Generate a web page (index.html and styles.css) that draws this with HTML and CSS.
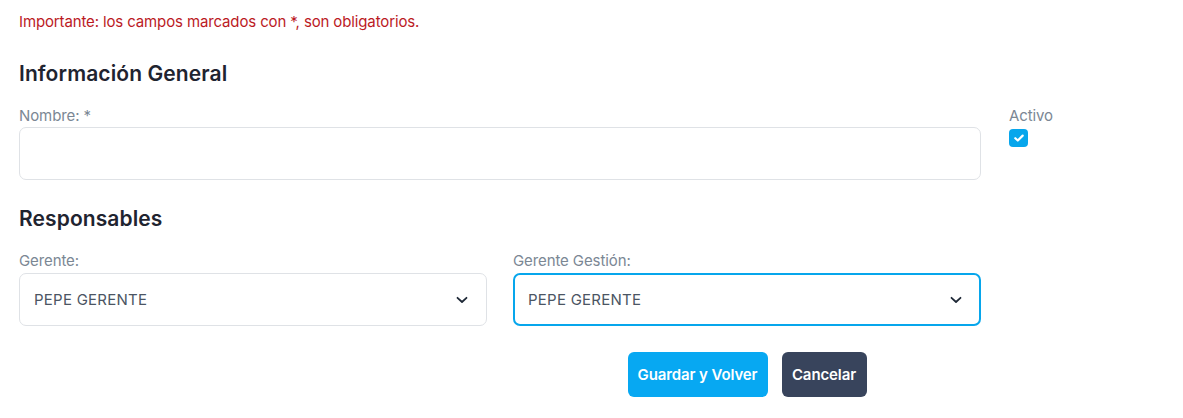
FILE: index.html
```html
<!DOCTYPE html>
<html lang="es">
<head>
<meta charset="utf-8">
<link rel="stylesheet" href="styles.css">
</head>
<body>
<form class="form">
  <p class="notice">Importante: los campos marcados con *, son obligatorios.</p>
  <h2 class="section-title title-general">Información General</h2>
  <div class="row">
    <div class="field field-wide">
      <label class="label">Nombre: *</label>
      <div class="input"></div>
    </div>
    <div class="field field-check">
      <label class="label">Activo</label>
      <span class="checkbox">
        <svg width="14" height="14" viewBox="0 0 14 14"><path d="M3.3 7.2 L5.8 9.5 L10.7 4.6" fill="none" stroke="#fff" stroke-width="2.2" stroke-linecap="round" stroke-linejoin="round"/></svg>
      </span>
    </div>
  </div>
  <h2 class="section-title title-resp">Responsables</h2>
  <div class="grid2">
    <div class="field">
      <label class="label">Gerente:</label>
      <div class="select">
        <span>PEPE GERENTE</span>
        <svg class="chev" width="12" height="8" viewBox="0 0 12 8"><path d="M1.5 1.8 L6 6 L10.5 1.8" fill="none" stroke="#1f2937" stroke-width="1.8" stroke-linecap="round" stroke-linejoin="round"/></svg>
      </div>
    </div>
    <div class="field">
      <label class="label">Gerente Gestión:</label>
      <div class="select focused">
        <span>PEPE GERENTE</span>
        <svg class="chev" width="12" height="8" viewBox="0 0 12 8"><path d="M1.5 1.8 L6 6 L10.5 1.8" fill="none" stroke="#1f2937" stroke-width="1.8" stroke-linecap="round" stroke-linejoin="round"/></svg>
      </div>
    </div>
    <div></div>
    <div class="actions">
      <button type="button" class="btn btn-primary">Guardar y Volver</button>
      <button type="button" class="btn btn-dark">Cancelar</button>
    </div>
  </div>
</form>
</body>
</html>
```

FILE: styles.css
```css
* { box-sizing: border-box; }
html, body { margin: 0; padding: 0; background: #fff; }
body {
  font-family: "Inter", "Liberation Sans", sans-serif;
  color: #1f2937;
}
.form {
  padding: 12px 19px 0 19px;
}
.notice {
  margin: 0;
  font-size: 15px;
  line-height: 20px;
  color: #bb1a1f;
  letter-spacing: -0.13px;
}
.section-title {
  margin: 0;
  font-size: 21px;
  font-weight: 600;
  line-height: 28px;
  color: #1f2430;
  letter-spacing: 0.1px;
}
.title-general { margin-top: 28px; }
.title-resp { margin-top: 25px; }
.row {
  display: flex;
  gap: 28px;
  margin-top: 20px;
}
.field { display: flex; flex-direction: column; }
.field-wide { width: 962px; flex: none; }
.label {
  font-size: 15px;
  line-height: 16px;
  color: #7b8794;
  margin-bottom: 3px;
  letter-spacing: -0.1px;
}
.input {
  height: 53px;
  border: 1px solid #dfe2e6;
  border-radius: 7px;
}
.field-check .label { margin-bottom: 5px; }
.checkbox {
  width: 19px;
  height: 18px;
  border-radius: 4px;
  background: #07a6ec;
  display: flex;
  align-items: center;
  justify-content: center;
}
.grid2 {
  display: grid;
  grid-template-columns: 468px 468px;
  column-gap: 26px;
  margin-top: 20px;
  width: 962px;
}
.grid2 .label { margin-bottom: 4px; }
.select {
  height: 53px;
  border: 1px solid #dfe2e6;
  border-radius: 7px;
  display: flex;
  align-items: center;
  justify-content: space-between;
  padding: 0 18px 0 14px;
  font-size: 15px;
  color: #4b5563;
  letter-spacing: 0.25px;
}
.select.focused {
  border: 2px solid #07a6ec;
  padding: 0 17px 0 13px;
}
.actions {
  display: flex;
  justify-content: center;
  gap: 14px;
  margin-top: 26px;
}
.btn {
  border: 0;
  height: 45px;
  border-radius: 6px;
  font-family: "Inter", "Liberation Sans", sans-serif;
  font-size: 15px;
  font-weight: 600;
  color: #fff;
  padding: 0 8px;
  letter-spacing: -0.1px;
}
.btn-primary { background: #07a8f2; width: 140px; }
.btn-dark { background: #38445c; width: 85px; }
```
